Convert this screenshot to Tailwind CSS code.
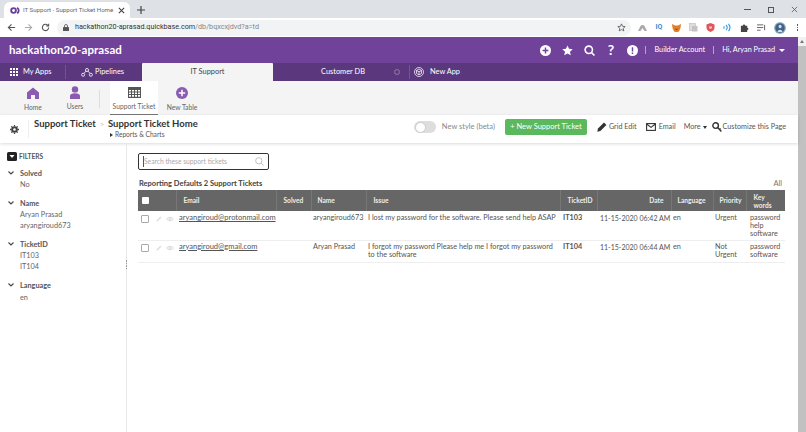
<!DOCTYPE html>
<html lang="en">
<head>
    <meta charset="UTF-8">
    <meta name="viewport" content="width=device-width, initial-scale=1.0">
    <title>IT Support - Support Ticket Home</title>
    <script src="https://cdn.jsdelivr.net/npm/@tailwindcss/browser@4"></script>
</head>
<body class="w-[806px] h-[432px] overflow-hidden bg-white font-['Lato',sans-serif] text-[#444]">

    <!-- Browser tabs -->
    <div class="h-[18px] bg-[#dee1e6] flex items-end pl-[4px]">
        <div class="w-[126px] h-[16px] bg-white rounded-t-md flex items-center pl-[6px] pr-[5px] font-['Roboto',sans-serif]">
            <svg class="w-[11px] h-[9px] shrink-0" viewBox="0 0 14 10" fill="none" stroke="#6b3fa0" stroke-width="2.4"><circle cx="4.5" cy="5" r="3"/><path d="M9 1.5a4 4 0 0 1 0 7"/></svg>
            <span class="ml-[2px] flex-1 min-w-0 text-[6.1px] text-[#666] whitespace-nowrap">IT Support - Support Ticket Home</span>
            <svg class="w-[7px] h-[7px] ml-[2px] shrink-0" viewBox="0 0 8 8" stroke="#444" stroke-width="1.3"><path d="M1 1l6 6M7 1l-6 6"/></svg>
        </div>
        <svg class="w-[8px] h-[8px] ml-[7px] mb-[4px]" viewBox="0 0 8 8" stroke="#444" stroke-width="1.2"><path d="M4 0v8M0 4h8"/></svg>
        <div class="ml-auto flex items-center gap-[17px] pr-[8px] pb-[5px]">
            <div class="w-[7px] h-px bg-[#555]"></div>
            <div class="w-[6px] h-[6px] border border-[#555]"></div>
            <svg class="w-[7px] h-[7px]" viewBox="0 0 8 8" stroke="#555" stroke-width="0.9"><path d="M1 1l6 6M7 1l-6 6"/></svg>
        </div>
    </div>

    <!-- Browser toolbar -->
    <div class="h-[19px] bg-white flex items-center pl-[7px] pr-[8px] font-['Roboto',sans-serif]">
        <svg class="w-[9px] h-[9px]" viewBox="0 0 10 10" fill="none" stroke="#555" stroke-width="1.2"><path d="M9 5H1.500M5 1.500L1.500 5 5 8.500"/></svg>
        <svg class="w-[9px] h-[9px] ml-[8px]" viewBox="0 0 10 10" fill="none" stroke="#aaa" stroke-width="1.2"><path d="M1 5h7.500M5 1.500L8.500 5 5 8.500"/></svg>
        <svg class="w-[9px] h-[9px] ml-[8px]" viewBox="0 0 10 10" fill="none" stroke="#555" stroke-width="1.2"><path d="M8.500 5A3.500 3.500 0 1 1 7.400 2.400M8.500 0.800v2.400H6"/></svg>
        <div class="ml-[7px] w-[574px] h-[16px] bg-[#f1f3f4] rounded-full flex items-center pl-[6px] text-[7.2px]">
            <svg class="w-[6px] h-[7px]" viewBox="0 0 6 7"><rect y="3" width="6" height="4" rx="0.5" fill="#555"/><path d="M1.500 3V2a1.500 1.500 0 0 1 3 0v1" fill="none" stroke="#555" stroke-width="0.8"/></svg>
            <span class="ml-[6px] text-[#333] whitespace-nowrap">hackathon20-aprasad.quickbase.com<span class="text-[#888]">/db/bqxcxjdvd?a=td</span></span>
            <svg class="w-[9px] h-[9px] ml-auto mr-[5px]" viewBox="0 0 10 10" fill="none" stroke="#555" stroke-width="0.9"><path d="M5 1l1.200 2.700 2.900.3-2.200 1.900.7 2.900L5 7.300 2.400 8.800l.7-2.900L.9 4l2.900-.3z"/></svg>
        </div>
        <div class="ml-auto flex items-center gap-[8px]">
            <svg class="w-[9px] h-[7px]" viewBox="0 0 9 7" fill="#aaa"><path d="M0 7l2.500-5a2.500 2.500 0 0 1 4 0L9 7H6.500L4.500 4 2.500 7z"/></svg>
            <div class="w-[9px] flex justify-center"><span class="text-[7px] font-bold text-[#3b8ed0] leading-none">IQ</span></div>
            <svg class="w-[9px] h-[8px]" viewBox="0 0 9 8"><path d="M0 0l3 1.500h3L9 0 8.500 4 7 7.500 5.500 8h-2L2 7.500.5 4z" fill="#e2802a"/><path d="M3 4.500l1 1.500h1l1-1.500-1.500.5z" fill="#7a4a20"/></svg>
            <svg class="w-[9px] h-[9px]" viewBox="0 0 9 9"><rect x="0.500" y="0.500" width="6" height="7" fill="#ddd" stroke="#bbb" stroke-width="0.6"/><rect x="3" y="3" width="5.500" height="5.500" fill="#c4c4c4"/></svg>
            <svg class="w-[9px] h-[9px]" viewBox="0 0 9 9"><path d="M4.500 0L8.500 1.500V4.500C8.500 7 6.500 8.300 4.500 9 2.500 8.300 .5 7 .5 4.500V1.500z" fill="#e0555a"/><path d="M3 3.500h3v1.500L4.500 6 3 5z" fill="#f6c5c7"/></svg>
            <svg class="w-[9px] h-[9px]" viewBox="0 0 9 9" fill="none" stroke="#2f9be8" stroke-width="1.1"><path d="M1 3.200v2.600"/><path d="M3 1.800a4 4 0 0 1 0 5.400"/><path d="M5.500 .8a6 6 0 0 1 0 7.400"/></svg>
            <svg class="w-[9px] h-[9px]" viewBox="0 0 10 10" fill="#444"><path d="M1 3h2.200a1.300 1.300 0 0 1 2.600 0H8v2.200a1.300 1.300 0 0 1 0 2.600V10H1z"/></svg>
            <svg class="w-[9px] h-[8px]" viewBox="0 0 10 9" stroke="#555" fill="none"><path d="M0 1h7M0 4h7M0 7h4M8.500 1v6"/></svg>
            <svg class="w-[12px] h-[12px]" viewBox="0 0 12 12"><circle cx="6" cy="6" r="6" fill="#9fb6c8"/><circle cx="6" cy="6" r="4.800" fill="#3f6288"/><path d="M3.500 10C4 7 8 7 8.500 10zM4.500 4.500a1.600 1.800 0 1 0 3.200 0 1.600 1.800 0 1 0-3.200 0" fill="#d5dde5"/></svg>
            <div class="flex flex-col gap-px ml-[3px]"><div class="w-[1.5px] h-[1.5px] bg-[#555]"></div><div class="w-[1.5px] h-[1.5px] bg-[#555]"></div><div class="w-[1.5px] h-[1.5px] bg-[#555]"></div></div>
        </div>
    </div>

    <div class="flex h-[395px]">
        <div class="w-[798px] flex flex-col">

            <!-- App title bar -->
            <div class="h-[26px] bg-[#70429a] flex items-center pl-[9px] pr-[13px] text-white">
                <span class="text-[11.5px] font-bold tracking-[0.1px]">hackathon20-aprasad</span>
                <div class="ml-auto flex items-center">
                    <svg class="w-[11px] h-[11px]" viewBox="0 0 12 12"><circle cx="6" cy="6" r="6" fill="#fff"/><path d="M6 2.800v6.400M2.800 6h6.400" stroke="#70429a" stroke-width="1.6"/></svg>
                    <svg class="w-[11px] h-[11px] ml-[11px]" viewBox="0 0 12 12" fill="#fff"><path d="M6 .5l1.700 3.700 4 .4-3 2.700.9 4L6 9.200l-3.600 2.100.9-4-3-2.700 4-.4z"/></svg>
                    <svg class="w-[11px] h-[11px] ml-[11px]" viewBox="0 0 12 12" fill="none" stroke="#fff" stroke-width="1.7"><circle cx="5.200" cy="5.200" r="4"/><path d="M8 8l3.400 3.400"/></svg>
                    <span class="ml-[11px] w-[9px] text-[14px] font-bold leading-none text-center">?</span>
                    <svg class="w-[11px] h-[11px] ml-[12px]" viewBox="0 0 12 12"><circle cx="6" cy="6" r="6" fill="#fff"/><path d="M6 2.500v4.500M6 8.300v1.500" stroke="#70429a" stroke-width="1.6"/></svg>
                    <div class="w-px h-[8px] bg-white/50 ml-[7px]"></div>
                    <span class="ml-[8px] text-[7.3px]">Builder Account</span>
                    <div class="w-px h-[8px] bg-white/50 ml-[8px]"></div>
                    <span class="ml-[8px] text-[7.3px]">Hi, Aryan Prasad</span>
                    <div class="ml-[4px] w-0 h-0 border-x-[3px] border-x-transparent border-t-[3px] border-t-white"></div>
                </div>
            </div>

            <!-- App nav -->
            <div class="h-[18px] bg-[#5b387e] flex items-stretch text-white text-[7.4px]">
                <div class="w-[65px] flex items-center pl-[10px]">
                    <svg class="w-[8px] h-[8px]" viewBox="0 0 8 8" fill="#fff"><path d="M0 0h2v2H0zM3 0h2v2H3zM6 0h2v2H6zM0 3h2v2H0zM3 3h2v2H3zM6 3h2v2H6zM0 6h2v2H0zM3 6h2v2H3zM6 6h2v2H6z"/></svg>
                    <span class="ml-[5px]">My Apps</span>
                </div>
                <div class="w-[77px] flex items-center pl-[15px] border-l border-white/15 my-[2px]">
                    <svg class="w-[12px] h-[9px]" viewBox="0 0 13 10" fill="none" stroke="#fff" stroke-width="0.9"><circle cx="2.200" cy="7.500" r="1.700"/><circle cx="6.500" cy="2.200" r="1.700"/><circle cx="10.800" cy="7.500" r="1.700"/><path d="M3.200 6l2.200-2.600M7.600 3.400L9.800 6"/></svg>
                    <span class="ml-[2px]">Pipelines</span>
                </div>
                <div class="w-[131px] bg-[#f4f4f4] text-[#444] rounded-t-[1px] flex items-center justify-center">IT Support</div>
                <div class="w-[136px] flex items-center relative">
                    <span class="w-full text-center pl-[4px]">Customer DB</span>
                    <div class="absolute right-[9px] w-[6px] h-[6px] rounded-full border border-white/30"></div>
                </div>
                <div class="flex items-center pl-[4px] border-l border-white/15 my-[2px]">
                    <svg class="w-[10px] h-[10px]" viewBox="0 0 12 12" fill="none" stroke="#fff" stroke-width="0.9"><circle cx="6" cy="6" r="5.400"/><path d="M6 2.500l3 1.600v3.600L6 9.400 3 7.700V4.100zM3 4.100L6 5.800l3-1.700M6 5.800v3.600"/></svg>
                    <span class="ml-[6px]">New App</span>
                </div>
            </div>

            <!-- Table tabs -->
            <div class="h-[34px] bg-[#f4f4f4] flex items-stretch text-[#666] text-[6.7px]">
                <div class="w-[66px] flex flex-col items-center pt-[6px]">
                    <svg class="w-[12px] h-[12px]" viewBox="0 0 12 12" fill="#8a5bb0"><path d="M6 .5L12 5.500V12H8V8H4V12H0V5.500z"/></svg>
                    <span class="mt-[3px]">Home</span>
                </div>
                <div class="w-[18px] flex flex-col items-center pt-[5px]">
                    <svg class="w-[12px] h-[13px] shrink-0" viewBox="0 0 12 13" fill="#8a5bb0"><circle cx="6" cy="3.400" r="3.200"/><path d="M1 13V9.800C1 8 3 7.200 6 7.200s5 .8 5 2.600V13z"/></svg>
                    <span class="mt-[2px]">Users</span>
                </div>
                <div class="w-px h-[18px] bg-[#ddd] ml-[15px] mt-[9px]"></div>
                <div class="w-[48px] ml-[10px] bg-white border-b border-[#777] flex flex-col items-center pt-[6px]">
                    <svg class="w-[13px] h-[11px]" viewBox="0 0 13 11" fill="#555"><path d="M0 0h13v11H0zM1 3v1.500h2V3zm3 0v1.500h2V3zm3 0v1.500h2V3zm3 0v1.500h2V3zM1 5.500V7h2V5.500zm3 0V7h2V5.500zm3 0V7h2V5.500zm3 0V7h2V5.500zM1 8v1.800h2V8zm3 0v1.800h2V8zm3 0v1.800h2V8zm3 0v1.800h2V8z" fill-rule="evenodd"/></svg>
                    <span class="mt-[3px] whitespace-nowrap">Support Ticket</span>
                </div>
                <div class="w-[48px] flex flex-col items-center pt-[6px]">
                    <svg class="w-[12px] h-[12px]" viewBox="0 0 12 12"><circle cx="6" cy="6" r="6" fill="#8a5bb0"/><path d="M6 2.800v6.400M2.800 6h6.400" stroke="#fff" stroke-width="1.5"/></svg>
                    <span class="mt-[3px] whitespace-nowrap">New Table</span>
                </div>
            </div>

            <!-- Page header -->
            <div class="h-[28px] bg-white flex items-center shadow-[0_1px_3px_rgba(0,0,0,0.15)] relative">
                <svg class="w-[9px] h-[9px] ml-[10px] shrink-0" viewBox="0 0 10 10" fill="none" stroke="#444" stroke-width="2.2"><circle cx="5" cy="5" r="2.600"/><path d="M5 0v1.500M5 8.500V10M0 5h1.500M8.500 5H10M1.500 1.500l1 1M7.500 7.500l1 1M1.500 8.500l1-1M7.500 2.500l1-1" stroke-width="1.4"/></svg>
                <div class="w-px h-[18px] bg-[#eee] ml-[9px]"></div>
                <div class="ml-[5px] self-start pt-[2px] flex flex-col w-[170px]">
                    <div class="flex items-center text-[9.5px] font-bold text-[#333] leading-[14px] whitespace-nowrap">
                        Support Ticket<span class="mx-[4px] text-[#bbb] font-normal text-[7px]">&gt;</span>Support Ticket Home
                    </div>
                </div>
                <div class="flex items-center absolute left-[110px] top-[15px] text-[6.6px] text-[#555]">
                    <div class="w-0 h-0 border-y-[2.5px] border-y-transparent border-l-[3px] border-l-[#333] mr-[2px]"></div>Reports &amp; Charts
                </div>
                <div class="ml-auto flex items-center pr-[12px] pb-[4px] text-[7.2px] text-[#555]">
                    <div class="w-[22px] h-[12px] bg-[#ddd] rounded-full flex items-center pl-px shrink-0"><div class="w-[11px] h-[11px] rounded-full bg-white border border-[#ccc]"></div></div>
                    <span class="ml-[6px] text-[7.5px] text-[#888] whitespace-nowrap">New style (beta)</span>
                    <div class="ml-[10px] w-[82px] h-[16px] bg-[#5cb85c] rounded-[2px] text-[7.5px] text-white flex items-center justify-center whitespace-nowrap">+ New Support Ticket</div>
                    <svg class="w-[10px] h-[10px] ml-[10px]" viewBox="0 0 10 10" fill="#333"><path d="M7 .6l2.400 2.400-6 6L.3 9.700 1 6.600z"/></svg>
                    <span class="ml-[2px] whitespace-nowrap">Grid Edit</span>
                    <svg class="w-[10px] h-[8px] ml-[9px]" viewBox="0 0 10 8" fill="none" stroke="#333" stroke-width="1.1"><rect x=".6" y=".6" width="8.800" height="6.800"/><path d="M.6 1l4.400 3.400L9.400 1"/></svg>
                    <span class="ml-[3px]">Email</span>
                    <span class="ml-[8px]">More</span>
                    <div class="ml-[2px] w-0 h-0 border-x-[2.5px] border-x-transparent border-t-[3px] border-t-[#333]"></div>
                    <svg class="w-[10px] h-[10px] ml-[5px]" viewBox="0 0 10 10" fill="none" stroke="#333" stroke-width="1.4"><circle cx="3.600" cy="3.600" r="2.800"/><path d="M5.600 5.600L9.400 9.400M7.600 7.600l1-1"/></svg>
                    <span class="ml-px whitespace-nowrap">Customize this Page</span>
                </div>
            </div>

            <div class="flex-1 flex min-h-0">
                <!-- Filters -->
                <aside class="w-[127px] border-r border-[#e8e8e8] pl-[7px] relative text-[7.3px] text-[#666] shrink-0">
                    <div class="flex items-center mt-[9px] font-bold text-[6.6px] text-[#555]">
                        <svg class="w-[10px] h-[9px]" viewBox="0 0 10 9"><rect width="10" height="9" rx="1.500" fill="#222"/><path d="M2.500 3h5L5 6z" fill="#fff"/></svg>
                        <span class="ml-[2px]">FILTERS</span>
                    </div>
                    <div class="mt-[6px] leading-[11px]">
                        <div class="flex items-center font-bold text-[#555]">
                            <svg class="w-[6px] h-[4px] ml-px" viewBox="0 0 6 4" fill="none" stroke="#444" stroke-width="1.1"><path d="M.5.5L3 3 5.500.5"/></svg>
                            <span class="ml-[6px]">Solved</span>
                        </div>
                        <div class="pl-[13px]">No</div>
                    </div>
                    <div class="mt-[8px] leading-[11px]">
                        <div class="flex items-center font-bold text-[#555]">
                            <svg class="w-[6px] h-[4px] ml-px" viewBox="0 0 6 4" fill="none" stroke="#444" stroke-width="1.1"><path d="M.5.5L3 3 5.500.5"/></svg>
                            <span class="ml-[6px]">Name</span>
                        </div>
                        <div class="pl-[13px]">Aryan Prasad<br>aryangiroud673</div>
                    </div>
                    <div class="mt-[8px] leading-[11px]">
                        <div class="flex items-center font-bold text-[#555]">
                            <svg class="w-[6px] h-[4px] ml-px" viewBox="0 0 6 4" fill="none" stroke="#444" stroke-width="1.1"><path d="M.5.5L3 3 5.500.5"/></svg>
                            <span class="ml-[6px]">TicketID</span>
                        </div>
                        <div class="pl-[13px]">IT103<br>IT104</div>
                    </div>
                    <div class="mt-[8px] leading-[11px]">
                        <div class="flex items-center font-bold text-[#555]">
                            <svg class="w-[6px] h-[4px] ml-px" viewBox="0 0 6 4" fill="none" stroke="#444" stroke-width="1.1"><path d="M.5.5L3 3 5.500.5"/></svg>
                            <span class="ml-[6px]">Language</span>
                        </div>
                        <div class="pl-[13px] mt-px">en</div>
                    </div>
                    <div class="absolute right-[-1px] top-[117px] flex flex-col gap-px">
                        <div class="w-[1.5px] h-[1.5px] bg-[#999]"></div><div class="w-[1.5px] h-[1.5px] bg-[#999]"></div><div class="w-[1.5px] h-[1.5px] bg-[#999]"></div><div class="w-[1.5px] h-[1.5px] bg-[#999]"></div>
                    </div>
                </aside>

                <!-- Report -->
                <main class="flex-1 pl-[11px] pr-[12px] pt-[10px] min-w-0 text-[7.5px]">
                    <div class="w-[131px] h-[17px] border border-[#333] rounded-[2px] flex items-center pl-[4px] pr-[4px] text-[6.7px] text-[#aaa]">
                        <span class="border-l border-[#555] whitespace-nowrap">Search these support tickets</span>
                        <svg class="w-[9px] h-[9px] ml-auto" viewBox="0 0 10 10" fill="none" stroke="#bbb"><circle cx="4.200" cy="4.200" r="3.500"/><path d="M6.800 6.800L9.500 9.500"/></svg>
                    </div>
                    <div class="flex items-end justify-between mt-[8px] h-[11px] leading-[11px] pl-px pr-[4px]">
                        <span class="font-bold text-[#444] text-[7.5px]">Reporting Defaults 2 Support Tickets</span>
                        <span class="text-[#777] text-[7.5px]">All</span>
                    </div>
                    <table class="w-[647px] table-fixed border-collapse mt-[1px] text-[7.25px] text-[#555]">
                        <thead>
                            <tr class="h-[21px] bg-[#666] text-[#eee] text-left text-[6.6px]">
                                <th class="w-[38px] pl-[4px] font-bold"><div class="w-[7px] h-[7px] bg-white rounded-[1px]"></div></th>
                                <th class="w-[100px] pl-[7px] font-bold border-l border-[#777]">Email</th>
                                <th class="w-[35px] pl-[7px] font-bold border-l border-[#777]">Solved</th>
                                <th class="w-[55px] pl-[6px] font-bold border-l border-[#777]">Name</th>
                                <th class="w-[194px] pl-[7px] font-bold border-l border-[#777]">Issue</th>
                                <th class="w-[37px] pl-[7px] font-bold border-l border-[#777]">TicketID</th>
                                <th class="w-[74px] pr-[7px] text-right font-bold border-l border-[#777]">Date</th>
                                <th class="w-[42px] pl-[6px] font-bold border-l border-[#777]">Language</th>
                                <th class="w-[33px] pl-[6px] font-bold border-l border-[#777]">Priority</th>
                                <th class="w-[39px] pl-[7px] font-bold border-l border-[#777] leading-[8px]">Key<br>words</th>
                            </tr>
                        </thead>
                        <tbody class="leading-[8px]">
                            <tr class="h-[29px] border-b border-[#eee] align-top">
                                <td class="pl-[3px] pt-[4px]">
                                    <div class="flex items-center">
                                        <div class="w-[8px] h-[8px] border border-[#aaa] rounded-[1px]"></div>
                                        <svg class="w-[6px] h-[6px] ml-[7px]" viewBox="0 0 6 6" fill="#ddd"><path d="M4.500.5L5.500 1.500 1.500 5.500H.5V4.500z"/></svg>
                                        <svg class="w-[8px] h-[6px] ml-[4px]" viewBox="0 0 8 6" fill="none" stroke="#ccc" stroke-width="0.7"><path d="M.5 3C2 .8 6 .8 7.500 3 6 5.200 2 5.200.5 3z"/><circle cx="4" cy="3" r="1"/></svg>
                                    </div>
                                </td>
                                <td class="pl-[3px] pt-[3px]"><span class="underline whitespace-nowrap text-[7.5px]">aryangiroud@protonmail.com</span></td>
                                <td></td>
                                <td class="pl-[2px] pt-[3px] whitespace-nowrap">aryangiroud673</td>
                                <td class="pl-[2px] pt-[3px] whitespace-nowrap">I lost my password for the software. Please send help ASAP</td>
                                <td class="pl-[3px] pt-[3px] font-bold">IT103</td>
                                <td class="pl-[3px] pt-[3px] whitespace-nowrap text-[7px]">11-15-2020 06:42 AM</td>
                                <td class="pl-[2px] pt-[3px]">en</td>
                                <td class="pl-[2px] pt-[3px]">Urgent</td>
                                <td class="pl-[4px] pt-[3px]">password<br>help<br>software</td>
                            </tr>
                            <tr class="h-[22px] border-b border-[#eee] align-top">
                                <td class="pl-[3px] pt-[3px]">
                                    <div class="flex items-center">
                                        <div class="w-[8px] h-[8px] border border-[#aaa] rounded-[1px]"></div>
                                        <svg class="w-[6px] h-[6px] ml-[7px]" viewBox="0 0 6 6" fill="#ddd"><path d="M4.500.5L5.500 1.500 1.500 5.500H.5V4.500z"/></svg>
                                        <svg class="w-[8px] h-[6px] ml-[4px]" viewBox="0 0 8 6" fill="none" stroke="#ccc" stroke-width="0.7"><path d="M.5 3C2 .8 6 .8 7.500 3 6 5.200 2 5.200.5 3z"/><circle cx="4" cy="3" r="1"/></svg>
                                    </div>
                                </td>
                                <td class="pl-[3px] pt-[2px]"><span class="underline whitespace-nowrap text-[7.5px]">aryangiroud@gmail.com</span></td>
                                <td></td>
                                <td class="pl-[2px] pt-[2px] whitespace-nowrap">Aryan Prasad</td>
                                <td class="pl-[2px] pr-[6px] pt-[2px]">I forgot my password Please help me I forgot my password to the software</td>
                                <td class="pl-[3px] pt-[2px] font-bold">IT104</td>
                                <td class="pl-[3px] pt-[2px] whitespace-nowrap text-[7px]">11-15-2020 06:44 AM</td>
                                <td class="pl-[2px] pt-[2px]">en</td>
                                <td class="pl-[2px] pt-[2px]">Not<br>Urgent</td>
                                <td class="pl-[4px] pt-[2px]">password<br>software</td>
                            </tr>
                        </tbody>
                    </table>
                </main>
            </div>
        </div>

        <!-- Page scrollbar -->
        <div class="w-[8px] bg-[#f1f1f1] flex flex-col items-center pt-[3px]">
            <div class="w-0 h-0 border-x-[2px] border-x-transparent border-b-[3px] border-b-[#777]"></div>
            <div class="w-full flex-1 mt-[3px] bg-[#c1c1c1]"></div>
        </div>
    </div>
</body>
</html>
